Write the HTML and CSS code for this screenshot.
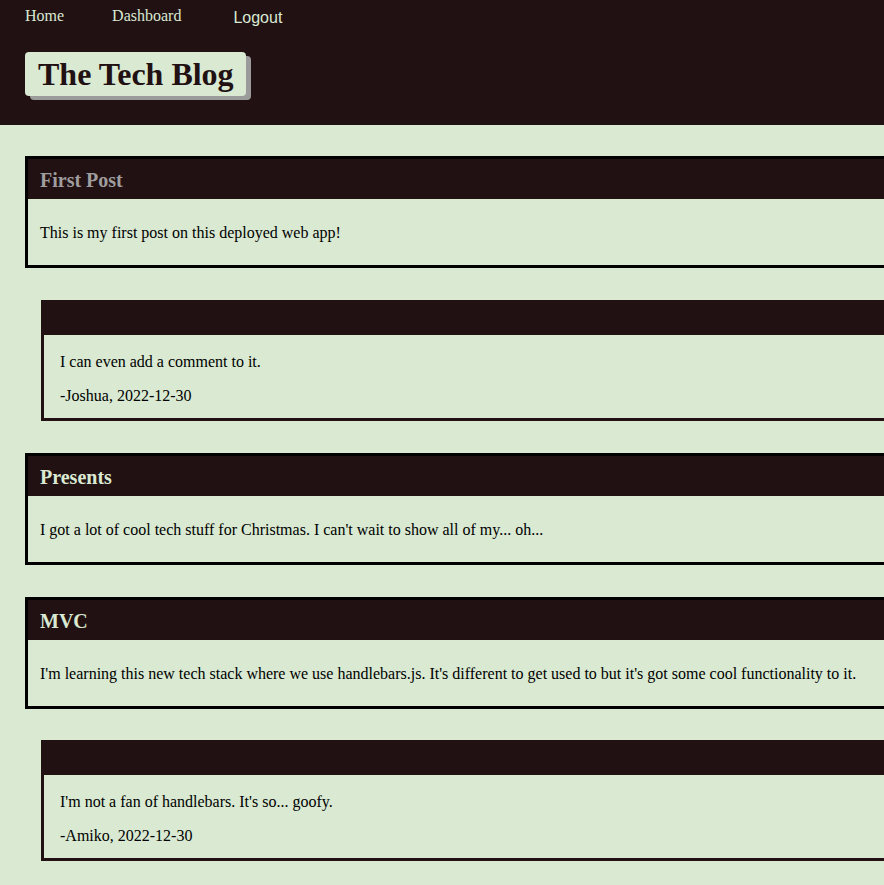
FILE: index.html
```html
<!DOCTYPE html>
<html lang="en">
<head>
<meta charset="utf-8">
<title>The Tech Blog</title>
<link rel="stylesheet" href="styles.css">
</head>
<body>
<header class="site-header">
  <nav class="nav">
    <a class="nav-link nav-home" href="#">Home</a>
    <a class="nav-link nav-dash" href="#">Dashboard</a>
    <button class="logout" type="button">Logout</button>
  </nav>
  <h1 class="brand">The Tech Blog</h1>
</header>
<main class="main">
  <section class="post">
    <h3 class="post-title post-title-muted">First Post</h3>
    <div class="post-body"><p>This is my first post on this deployed web app!</p></div>
  </section>
  <section class="comment">
    <div class="comment-head"></div>
    <div class="comment-body">
      <p>I can even add a comment to it.</p>
      <p>-Joshua, 2022-12-30</p>
    </div>
  </section>
  <section class="post">
    <h3 class="post-title">Presents</h3>
    <div class="post-body"><p>I got a lot of cool tech stuff for Christmas. I can't wait to show all of my... oh...</p></div>
  </section>
  <section class="post">
    <h3 class="post-title">MVC</h3>
    <div class="post-body"><p>I'm learning this new tech stack where we use handlebars.js. It's different to get used to but it's got some cool functionality to it.</p></div>
  </section>
  <section class="comment">
    <div class="comment-head"></div>
    <div class="comment-body">
      <p>I'm not a fan of handlebars. It's so... goofy.</p>
      <p>-Amiko, 2022-12-30</p>
    </div>
  </section>
</main>
</body>
</html>
```
FILE: styles.css
```css
html, body {
  margin: 0;
  padding: 0;
  overflow-x: hidden;
}
body {
  background: #d9e9d2;
  color: #000;
  font-family: "Liberation Serif", "Times New Roman", serif;
  font-size: 16px;
}
.site-header {
  background: #221112;
  padding: 0 25px 29px;
}
.nav {
  display: flex;
  align-items: flex-start;
  height: 24px;
  padding-top: 7px;
  box-sizing: border-box;
}
.nav-link {
  color: #d9e9d2;
  text-decoration: none;
  line-height: 18px;
}
.nav-home { margin-right: 48px; }
.nav-dash { margin-right: 52px; }
.logout {
  background: none;
  border: none;
  padding: 0;
  margin-top: 2px;
  color: #d9e9d2;
  font-family: "Liberation Sans", Arial, sans-serif;
  font-size: 16px;
  line-height: 18px;
  cursor: pointer;
}
.brand {
  display: inline-block;
  margin: 28px 0 0;
  padding: 4px 12px 4px 13px;
  background: #d9e9d2;
  color: #221112;
  font-size: 32px;
  font-weight: bold;
  line-height: 36px;
  border-radius: 4px;
  box-shadow: 5px 4px 0 #9b9b9b;
}
.main {
  padding-top: 31px;
}
.post {
  margin: 0 0 32px 25px;
  width: 100%;
  border: 3px solid #000;
}
.post:nth-of-type(4) {
  margin-bottom: 31px;
}
.post-title {
  margin: 0;
  background: #221112;
  color: #d9e9d2;
  padding: 2px 12px 0;
  font-size: 20px;
  font-weight: bold;
  line-height: 38px;
}
.post-title-muted {
  color: #9f9d9e;
}
.post-body {
  padding: 0 12px;
}
.post-body p {
  margin: 25px 0 23px;
  line-height: 18px;
}
.comment {
  margin: 0 0 32px 41px;
  width: 100%;
  border: 3px solid #221112;
}
.comment-head {
  background: #221112;
  height: 32px;
}
.comment-body {
  padding: 2px 16px 0;
}
.comment-body p {
  margin: 16px 0;
  line-height: 17.5px;
}
.comment-body p:last-child {
  margin-bottom: 14px;
}
```
